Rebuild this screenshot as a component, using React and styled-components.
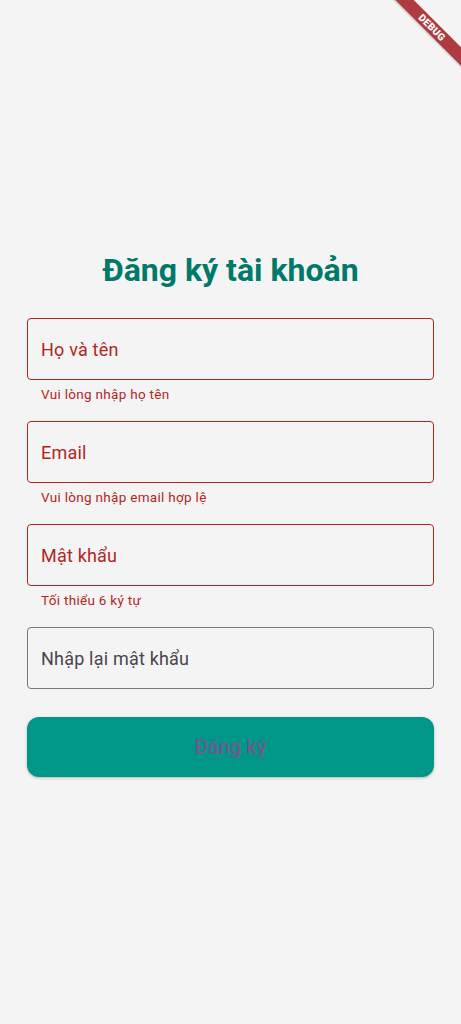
import React from 'react'
import styled, { createGlobalStyle } from 'styled-components'

const GlobalStyle = createGlobalStyle`
    html, body {
        margin: 0;
        padding: 0;
        background: #f4f4f4;
        font-family: Roboto, 'Noto Sans', sans-serif;
    }
    * {
        box-sizing: border-box;
    }
`;

const Page = styled.div`
    position: relative;
    min-height: 1024px;
    display: flex;
    flex-direction: column;
    justify-content: center;
    padding: 5px 27px 0 27px;
    overflow: hidden;
`;

const Title = styled.h1`
    margin: 0 0 30px 0;
    text-align: center;
    font-size: 32px;
    line-height: 36px;
    font-weight: 700;
    color: #00796b;
`;

const Form = styled.form`
    display: flex;
    flex-direction: column;
    gap: 16px;
`;

const Group = styled.div`
    display: flex;
    flex-direction: column;
`;

const Input = styled.input`
    height: 62px;
    width: 100%;
    padding: 0 13px;
    border: 1px solid ${p => (p.$error ? '#b3261e' : '#79747e')};
    border-radius: 4px;
    background: transparent;
    font-family: Roboto, sans-serif;
    font-size: 18px;
    letter-spacing: 0.2px;
    outline: none;

    &::placeholder {
        color: ${p => (p.$error ? '#b3261e' : '#49454f')};
        opacity: 1;
    }
`;

const ErrorText = styled.div`
    padding: 5px 14px 2px 14px;
    line-height: 18px;
    font-size: 13.5px;
    color: #b3261e;
    letter-spacing: 0.3px;
`;

const SubmitButton = styled.button`
    margin-top: 12px;
    height: 60px;
    width: 100%;
    border: none;
    border-radius: 12px;
    background: #009688;
    color: #6d5a91;
    font-family: Roboto, sans-serif;
    font-size: 20px;
    font-weight: 500;
    box-shadow: 0 1px 3px rgba(0, 0, 0, 0.25);
`;

// flutter debug ribbon in the top-right corner
const Banner = styled.div`
    position: absolute;
    top: 21px;
    right: -26px;
    width: 110px;
    height: 13px;
    background: #ad3b40;
    color: #fff;
    font-size: 10px;
    font-weight: 900;
    line-height: 13px;
    text-align: center;
    letter-spacing: 0.3px;
    transform: rotate(45deg);
    box-shadow: 0 1px 2px rgba(0, 0, 0, 0.2);
`;

const fields = [
    { placeholder: 'Họ và tên', error: 'Vui lòng nhập họ tên' },
    { placeholder: 'Email', error: 'Vui lòng nhập email hợp lệ' },
    { placeholder: 'Mật khẩu', error: 'Tối thiểu 6 ký tự', type: 'password' },
    { placeholder: 'Nhập lại mật khẩu', type: 'password' },
];

const App = () => {
    return (
        <Page>
            <GlobalStyle />
            <Banner>DEBUG</Banner>
            <Title>Đăng ký tài khoản</Title>
            <Form onSubmit={e => e.preventDefault()}>
                {fields.map(f => (
                    <Group key={f.placeholder}>
                        <Input
                            type={f.type || 'text'}
                            placeholder={f.placeholder}
                            $error={!!f.error}
                        />
                        {f.error && <ErrorText>{f.error}</ErrorText>}
                    </Group>
                ))}
                <SubmitButton type="submit">Đăng ký</SubmitButton>
            </Form>
        </Page>
    )
}

export default App
